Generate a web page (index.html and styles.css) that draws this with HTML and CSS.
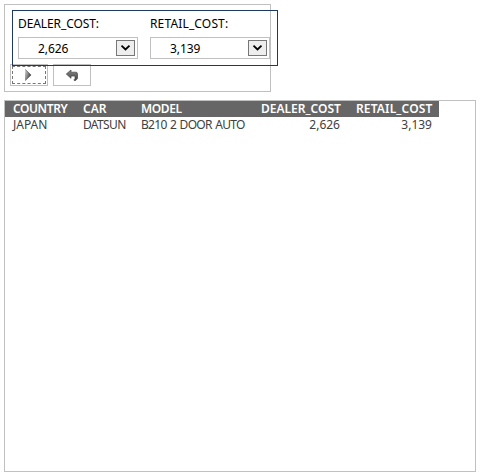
FILE: index.html
```html
<!DOCTYPE html>
<html lang="en">
<head>
<meta charset="utf-8">
<title>Report</title>
<link rel="stylesheet" href="styles.css">
</head>
<body>
<section class="form-panel">
  <div class="prompts">
    <div class="field">
      <div class="label">DEALER_COST:</div>
      <div class="select"><span>2,626</span><span class="drop"><svg width="11" height="8" viewBox="0 0 11 8"><path d="M1.5 1.7l4 3.8 4-3.8" fill="none" stroke="#000" stroke-width="1.8"/></svg></span></div>
    </div>
    <div class="field">
      <div class="label retail">RETAIL_COST:</div>
      <div class="select"><span>3,139</span><span class="drop"><svg width="11" height="8" viewBox="0 0 11 8"><path d="M1.5 1.7l4 3.8 4-3.8" fill="none" stroke="#000" stroke-width="1.8"/></svg></span></div>
    </div>
  </div>
  <div class="actions">
    <div class="button focused">
      <svg width="16" height="16" viewBox="0 0 16 16"><defs><linearGradient id="g" x1="0" x2="1" y1="0" y2=".6"><stop offset="0" stop-color="#ddd"/><stop offset="1" stop-color="#333"/></linearGradient></defs><path d="M4 2.2v11.6L10.3 8z" fill="url(#g)"/><path d="M4.3 13.5L10 8 4.3 2.5" fill="none" stroke="#666" stroke-width=".8"/></svg>
    </div>
    <div class="button">
      <svg width="16" height="16" viewBox="0 0 16 16"><defs><linearGradient id="r" x1="0" x2="0" y1="0" y2="1"><stop offset="0" stop-color="#888"/><stop offset="1" stop-color="#444"/></linearGradient></defs><path d="M2.3 7L7 3v2.2h4.9q1.6 0 1.6 1.8v4.6L11.6 13.5h-1.4v-1l.8-.8V9H7v2.3z" fill="url(#r)" stroke="#444" stroke-width=".7"/></svg>
    </div>
  </div>
</section>
<section class="report">
  <table>
    <colgroup><col class="c1"><col class="c2"><col class="c3"><col class="c4"><col class="c5"></colgroup>
    <thead><tr><th class="tight">COUNTRY</th><th>CAR</th><th class="tight">MODEL</th><th class="num cost">DEALER_COST</th><th class="num retail">RETAIL_COST</th></tr></thead>
    <tbody><tr><td>JAPAN</td><td class="car">DATSUN</td><td class="model">B210 2 DOOR AUTO</td><td class="num cost">2,626</td><td class="num">3,139</td></tr></tbody>
  </table>
</section>
</body>
</html>
```
FILE: styles.css
```css
* { box-sizing: border-box; }
body {
  margin: 0;
  padding: 4px;
  background: #fff;
  font-family: "Noto Sans", sans-serif;
  font-size: 12px;
  color: #000;
}
.form-panel {
  width: 267px;
  height: 88px;
  padding: 5px 0 0 5px;
  border: 1px solid #c0c0c0;
}
.prompts {
  position: relative;
  z-index: 1;
  display: flex;
  gap: 12px;
  width: 266px;
  height: 56px;
  margin-left: 2px;
  padding: 5px 0 0 5px;
  border: 1px solid #1f3864;
}
.field { width: 120px; flex: none; }
.label {
  height: 21px;
  line-height: 16px;
  letter-spacing: -0.1px;
  white-space: nowrap;
}
.retail { letter-spacing: 0.15px; }
.select {
  display: flex;
  justify-content: space-between;
  width: 120px;
  height: 22px;
  padding: 2px 2px 0 19px;
  border: 1px solid #c0c0c0;
  line-height: 18px;
  letter-spacing: -0.1px;
}
.drop {
  display: flex;
  align-items: center;
  justify-content: center;
  width: 19px;
  height: 16px;
  border: 1px solid #777;
  background: #eee;
}
.actions { display: flex; gap: 5px; margin-top: -2px; }
.button {
  display: flex;
  align-items: center;
  justify-content: center;
  width: 38px;
  height: 22px;
  border: 1px solid #c0c0c0;
}
.focused { outline: 1px dashed #777; outline-offset: -3px; }
.report {
  width: 472px;
  height: 372px;
  margin-top: 8px;
  border: 1px solid #c0c0c0;
}
table {
  width: 434px;
  table-layout: fixed;
  border-collapse: collapse;
}
.c1 { width: 70px; }
.c2 { width: 58px; }
.c3 { width: 120px; }
.c4 { width: 95px; }
.c5 { width: 91px; }
th, td {
  height: 16px;
  padding: 0 8px;
  line-height: 16px;
  text-align: left;
  white-space: nowrap;
}
th { background: #666; color: #fff; font-weight: 600; }
td { color: #404040; }
.tight { letter-spacing: -0.4px; }
.car { letter-spacing: -0.65px; }
.model { letter-spacing: -0.7px; word-spacing: 1px; }
.num { text-align: right; padding-right: 7px; }
.cost { padding-right: 8px; }
```
